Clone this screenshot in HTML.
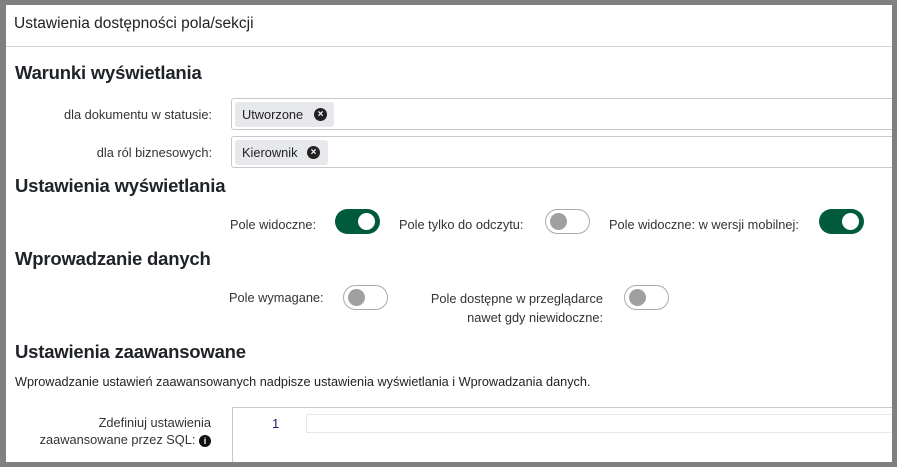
<!DOCTYPE html>
<html><head><meta charset="utf-8"><style>
*{margin:0;padding:0;box-sizing:border-box}
body{width:897px;height:467px;background:#808080;position:relative;overflow:hidden;font-family:"Liberation Sans",sans-serif;color:#212529}
#w{position:absolute;left:6px;top:5px;width:886px;height:457px;background:#fff;overflow:hidden}
.a{position:absolute;white-space:nowrap}
.h{font-size:18.5px;font-weight:bold;color:#1f2328;letter-spacing:-0.2px}
.l{font-size:12.8px;color:#333;text-align:right}
.box{position:absolute;border:1px solid #c8c8c8;border-radius:3px;height:32px;width:700px;background:#fff}
.tag{position:absolute;left:3px;top:3px;height:25px;background:#e6e8ec;border-radius:3px;font-size:12.8px;line-height:25px;padding-left:7px;color:#222}
.x{position:absolute;top:6px;width:13px;height:13px;border-radius:50%;background:#222;color:#fff;font-size:10px;line-height:13px;text-align:center;font-weight:bold}
.t{position:absolute;width:45px;height:25px;border-radius:13px}
.on{background:#005a3c}
.on::after{content:"";position:absolute;right:5px;top:4px;width:17px;height:17px;border-radius:50%;background:#fff}
.off{background:#fff;border:1px solid #aaa}
.off::after{content:"";position:absolute;left:4px;top:3px;width:17px;height:17px;border-radius:50%;background:#a0a0a0}
</style></head><body><div id="w">
<div class="a" style="left:8px;top:10px;font-size:15.5px;color:#222">Ustawienia dostępności pola/sekcji</div>
<div class="a" style="left:0;top:41px;width:886px;height:1px;background:#d4d4d4"></div>
<div class="a h" style="left:9px;top:57px">Warunki wyświetlania</div>
<div class="a l" style="right:680px;top:102px">dla dokumentu w statusie:</div>
<div class="box" style="left:225px;top:93px"><div class="tag" style="width:99px">Utworzone<span class="x" style="left:79px">×</span></div></div>
<div class="a l" style="right:680px;top:140px">dla ról biznesowych:</div>
<div class="box" style="left:225px;top:131px"><div class="tag" style="width:93px">Kierownik<span class="x" style="left:72px">×</span></div></div>
<div class="a h" style="left:9px;top:170px">Ustawienia wyświetlania</div>
<div class="a l" style="left:224px;top:212px">Pole widoczne:</div>
<div class="t on" style="left:329px;top:204px"></div>
<div class="a l" style="left:393px;top:212px">Pole tylko do odczytu:</div>
<div class="t off" style="left:539px;top:204px"></div>
<div class="a l" style="left:603px;top:212px">Pole widoczne: w wersji mobilnej:</div>
<div class="t on" style="left:813px;top:204px"></div>
<div class="a h" style="left:9px;top:243px">Wprowadzanie danych</div>
<div class="a l" style="left:223px;top:285px">Pole wymagane:</div>
<div class="t off" style="left:337px;top:280px"></div>
<div class="a l" style="right:289px;top:284px;line-height:19px">Pole dostępne w przeglądarce<br>nawet gdy niewidoczne:</div>
<div class="t off" style="left:618px;top:280px"></div>
<div class="a h" style="left:9px;top:336px">Ustawienia zaawansowane</div>
<div class="a" style="left:9px;top:370px;font-size:12.7px;color:#222">Wprowadzanie ustawień zaawansowanych nadpisze ustawienia wyświetlania i Wprowadzania danych.</div>
<div class="a l" style="right:681px;top:409px;line-height:17px">Zdefiniuj ustawienia<br>zaawansowane przez SQL: <span style="display:inline-block;width:12px;height:12px;border-radius:50%;background:#111;color:#fff;font-size:9px;line-height:12px;text-align:center;font-weight:bold">i</span></div>
<div class="a" style="left:226px;top:402px;width:700px;height:80px;border:1px solid #c8c8c8;border-right:none"></div>
<div class="a" style="left:266px;top:411px;font-size:13px;color:#1a1a6e">1</div>
<div class="a" style="left:300px;top:409px;width:600px;height:19px;border:1px solid #e8e8e8"></div>
</div></body></html>
